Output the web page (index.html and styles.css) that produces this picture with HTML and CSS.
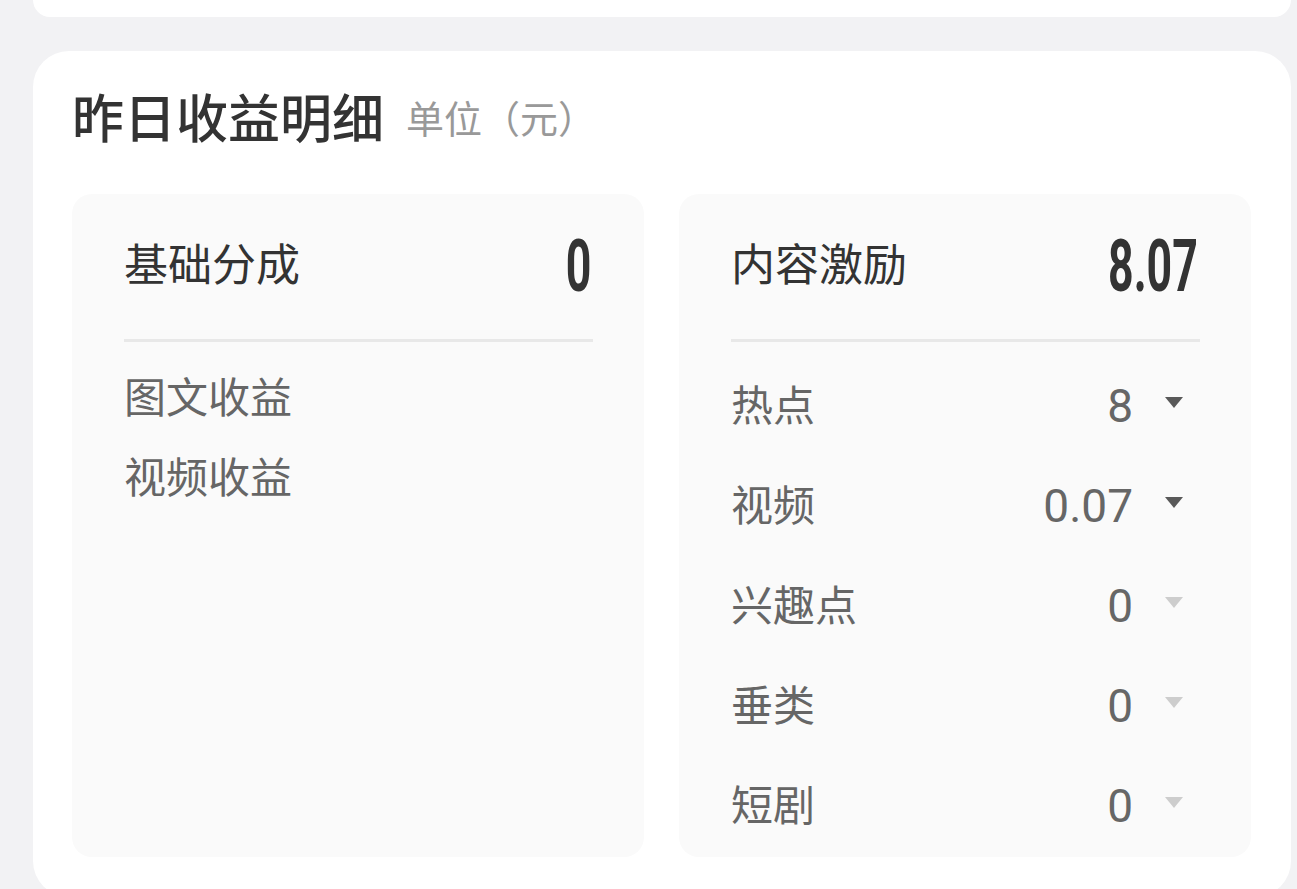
FILE: index.html
```html
<!DOCTYPE html>
<html lang="zh-CN">
<head>
    <meta charset="UTF-8">
    <meta name="viewport" content="width=device-width, initial-scale=1.0">
    <title>昨日收益明细</title>
    <link rel="stylesheet" href="styles.css">
</head>
<body>

<!-- Хвост предыдущей карточки -->
<div class="top-card"></div>

<div class="card">
    <div class="card-title">
        <h2>昨日收益明细</h2>
        <span class="unit">单位（元）</span>
    </div>

    <div class="panels">
        <!-- Базовая доля -->
        <div class="panel">
            <div class="panel-head">
                <span class="panel-name">基础分成</span>
                <span class="panel-total"><span>0</span></span>
            </div>
            <ul class="items items-plain">
                <li>图文收益</li>
                <li>视频收益</li>
            </ul>
        </div>

        <!-- Поощрение контента -->
        <div class="panel">
            <div class="panel-head">
                <span class="panel-name">内容激励</span>
                <span class="panel-total"><span>8.07</span></span>
            </div>
            <ul class="items">
                <li><span class="item-name">热点</span><span class="item-value">8</span><i class="arrow"></i></li>
                <li><span class="item-name">视频</span><span class="item-value">0.07</span><i class="arrow"></i></li>
                <li><span class="item-name">兴趣点</span><span class="item-value">0</span><i class="arrow muted"></i></li>
                <li><span class="item-name">垂类</span><span class="item-value">0</span><i class="arrow muted"></i></li>
                <li><span class="item-name">短剧</span><span class="item-value">0</span><i class="arrow muted"></i></li>
            </ul>
        </div>
    </div>
</div>

</body>
</html>
```

FILE: styles.css
```css
/* Основные стили */
body {
    margin: 0;
    background-color: #f2f2f4;
    font-family: "Noto Sans CJK SC", "Noto Sans", sans-serif;
    color: #333;
    overflow: hidden;
}
.top-card {
    height: 17px;
    margin: 0 6px 0 33px;
    background-color: #fff;
    border-radius: 0 0 36px 36px;
}
.card {
    margin: 34px 6px 0 33px;
    padding: 39px 40px 40px 39px;
    background-color: #fff;
    border-radius: 36px;
}
.card-title {
    display: flex;
    align-items: center;
    height: 52px;
    margin-bottom: 52px;
}
.card-title h2 {
    margin: 0;
    font-size: 52px;
    line-height: 52px;
    font-weight: 500;
    color: #333;
}
.card-title .unit {
    margin: 2px 0 0 22px;
    font-size: 38px;
    line-height: 38px;
    color: #999;
}

.panels {
    display: flex;
    gap: 35px;
}
.panel {
    flex: 1;
    height: 663px;
    padding: 0 51px 0 52px;
    background-color: #fafafa;
    border-radius: 20px;
    box-sizing: border-box;
}
.panel-head {
    display: flex;
    align-items: center;
    justify-content: space-between;
    height: 145px;
    border-bottom: 3px solid #e8e8e8;
}
.panel-name {
    margin-bottom: 9px;
    font-size: 44px;
    line-height: 50px;
    color: #333;
}
.panel-total {
    margin-right: 2px;
}
.panel-total span {
    display: inline-block;
    font-family: Roboto, "Liberation Sans", sans-serif;
    font-weight: 700;
    font-size: 72px;
    line-height: 72px;
    color: #333;
    transform: scaleX(0.62);
    transform-origin: right center;
}

/* Списки статей */
.items {
    list-style: none;
    margin: 0;
    padding: 14px 0 0;
}
.items li {
    display: flex;
    align-items: center;
    height: 100px;
    font-size: 42px;
    color: #666;
}
.items-plain {
    padding-top: 12px;
}
.items-plain li {
    height: 80px;
}
.item-name {
    flex: 1;
    margin-bottom: 8px;
}
.item-value {
    font-family: Roboto, "Liberation Sans", sans-serif;
    font-size: 46px;
    line-height: 50px;
    color: #666;
}
.arrow {
    width: 0;
    height: 0;
    margin: 0 17px 7px 32px;
    border-left: 9px solid transparent;
    border-right: 9px solid transparent;
    border-top: 11px solid #595959;
}
.arrow.muted {
    border-top-color: #cdcdcd;
}
```
